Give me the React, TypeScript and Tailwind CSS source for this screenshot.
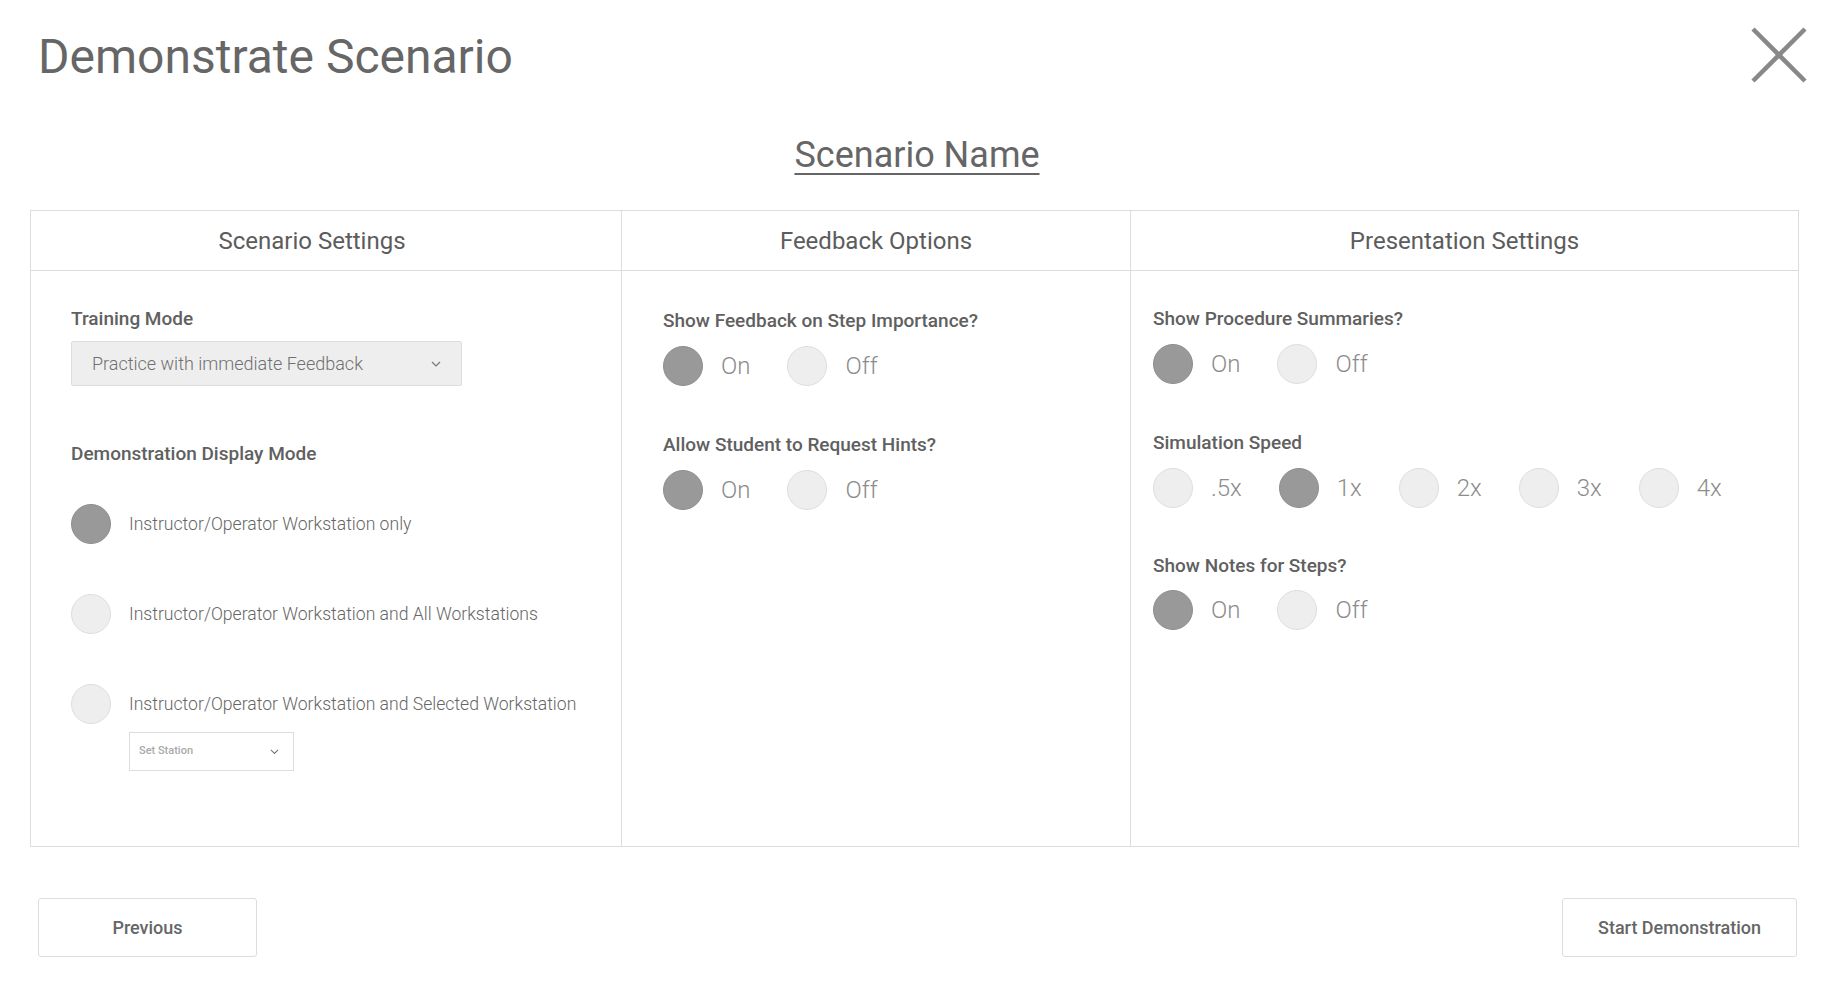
import React from "react";

function Dot({ on }: { on?: boolean }) {
  return (
    <span
      className={
        on
          ? "block w-10 h-10 shrink-0 rounded-full bg-[#999] border border-[#8f8f8f]"
          : "block w-10 h-10 shrink-0 rounded-full bg-[#eeeeee] border border-[#dedede]"
      }
    />
  );
}

function Toggle({ options, active }: { options: string[]; active: number }) {
  return (
    <div className="flex items-center">
      {options.map((o, i) => (
        <div key={o} className="flex items-center gap-[18px] mr-[37px]">
          <Dot on={i === active} />
          <span className="text-[24px] font-light leading-none text-[#8c8c8c]">{o}</span>
        </div>
      ))}
    </div>
  );
}

function Label({ children }: { children: React.ReactNode }) {
  return <div className="text-[19px] font-medium leading-[22px] text-[#606060]">{children}</div>;
}

function Chevron({ size = 10 }: { size?: number }) {
  return (
    <svg width={size} height={size * 0.6} viewBox="0 0 10 6" fill="none">
      <polyline points="1,1 5,5 9,1" stroke="#777" strokeWidth="1.2" />
    </svg>
  );
}

export default function App() {
  return (
    <div className="w-[1834px] h-[995px] bg-white font-['Roboto','Liberation_Sans',sans-serif]">
      {/* header */}
      <div className="flex items-start justify-between pl-[38px] pr-[27px] pt-[29px]">
        <h1 className="text-[48px] leading-[56px] text-[#666]">Demonstrate Scenario</h1>
        <button className="w-[56px] h-[56px] flex items-center justify-center -mt-[2px]">
          <svg width="56" height="56" viewBox="0 0 56 56">
            <line x1="2" y1="2" x2="54" y2="54" stroke="#888" strokeWidth="4.5" />
            <line x1="54" y1="2" x2="2" y2="54" stroke="#888" strokeWidth="4.5" />
          </svg>
        </button>
      </div>

      <div className="flex justify-center mt-[49px]">
        <h2 className="text-[36px] leading-[42px] text-[#666] underline decoration-2 underline-offset-[6px]">
          Scenario Name
        </h2>
      </div>

      {/* settings table */}
      <div className="ml-[30px] mr-[35px] mt-[34px] border border-[#dddddd] grid grid-cols-[591px_509px_1fr]">
        {/* column 1 */}
        <div className="border-r border-[#dddddd]">
          <div className="h-[60px] border-b border-[#dddddd] flex items-center justify-center pr-[28px] text-[24px] text-[#5c5c5c]">
            Scenario Settings
          </div>
          <div className="h-[575px] pl-[40px] pt-[37px]">
            <Label>Training Mode</Label>
            <div className="mt-[11px] w-[391px] h-[45px] bg-[#eeeeee] border border-[#dddddd] rounded-[2px] flex items-center justify-between pl-[20px] pr-[20px]">
              <span className="text-[18px] font-light text-[#707070]">Practice with immediate Feedback</span>
              <Chevron />
            </div>
            <div className="mt-[57px]">
              <Label>Demonstration Display Mode</Label>
            </div>
            <div className="mt-[39px] flex flex-col gap-[50px]">
              <div className="flex items-center gap-[18px]">
                <Dot on />
                <span className="text-[17.6px] font-light text-[#666]">Instructor/Operator Workstation only</span>
              </div>
              <div className="flex items-center gap-[18px]">
                <Dot />
                <span className="text-[17.6px] font-light text-[#666]">Instructor/Operator Workstation and All Workstations</span>
              </div>
              <div>
                <div className="flex items-center gap-[18px]">
                  <Dot />
                  <span className="text-[17.6px] font-light text-[#666]">
                    Instructor/Operator Workstation and Selected Workstation
                  </span>
                </div>
                <div className="ml-[58px] mt-[8px] w-[165px] h-[39px] border border-[#dddddd] flex items-center justify-between pl-[9px] pr-[14px]">
                  <span className="text-[11px] font-medium text-[#aaa]">Set Station</span>
                  <Chevron size={9} />
                </div>
              </div>
            </div>
          </div>
        </div>

        {/* column 2 */}
        <div className="border-r border-[#dddddd]">
          <div className="h-[60px] border-b border-[#dddddd] flex items-center justify-center text-[24px] text-[#5c5c5c]">
            Feedback Options
          </div>
          <div className="h-[575px] pl-[41px] pt-[39px] flex flex-col">
            <Label>Show Feedback on Step Importance?</Label>
            <div className="mt-[14px]">
              <Toggle options={["On", "Off"]} active={0} />
            </div>
            <div className="mt-[48px]">
              <Label>Allow Student to Request Hints?</Label>
            </div>
            <div className="mt-[14px]">
              <Toggle options={["On", "Off"]} active={0} />
            </div>
          </div>
        </div>

        {/* column 3 */}
        <div>
          <div className="h-[60px] border-b border-[#dddddd] flex items-center justify-center text-[24px] text-[#5c5c5c]">
            Presentation Settings
          </div>
          <div className="h-[575px] pl-[22px] pt-[37px] flex flex-col">
            <Label>Show Procedure Summaries?</Label>
            <div className="mt-[14px]">
              <Toggle options={["On", "Off"]} active={0} />
            </div>
            <div className="mt-[48px]">
              <Label>Simulation Speed</Label>
            </div>
            <div className="mt-[14px]">
              <Toggle options={[".5x", "1x", "2x", "3x", "4x"]} active={1} />
            </div>
            <div className="mt-[47px]">
              <Label>Show Notes for Steps?</Label>
            </div>
            <div className="mt-[13px]">
              <Toggle options={["On", "Off"]} active={0} />
            </div>
          </div>
        </div>
      </div>

      {/* footer buttons */}
      <div className="flex justify-between pl-[38px] pr-[37px] mt-[51px]">
        <button className="w-[219px] h-[59px] border border-[#dddddd] rounded-[3px] text-[18px] font-medium text-[#666]">
          Previous
        </button>
        <button className="w-[235px] h-[59px] border border-[#dddddd] rounded-[3px] text-[18px] font-medium text-[#666]">
          Start Demonstration
        </button>
      </div>
    </div>
  );
}
